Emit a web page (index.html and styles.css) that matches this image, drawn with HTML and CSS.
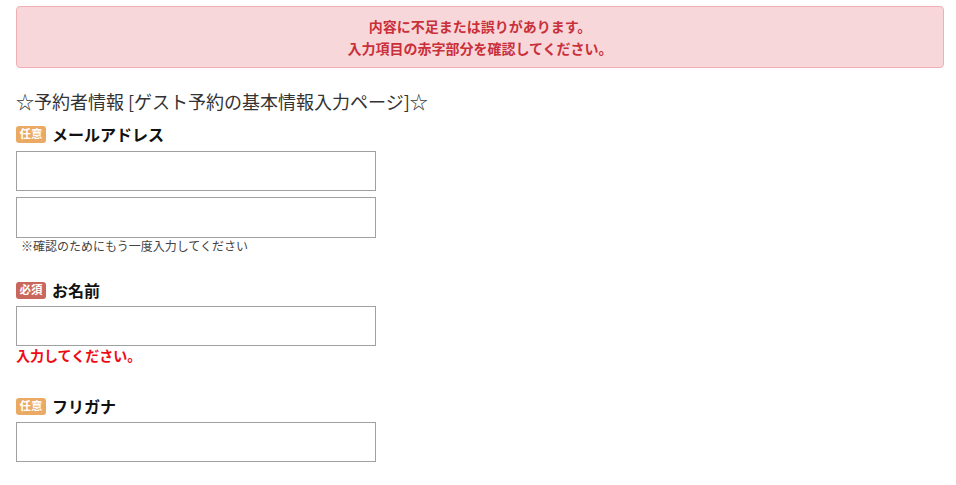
FILE: index.html
```html
<!DOCTYPE html>
<html lang="ja">
<head>
<meta charset="utf-8">
<title>予約者情報</title>
<link rel="stylesheet" href="styles.css">
</head>
<body>
<div class="page">
  <div class="alert">
    <p>内容に不足または誤りがあります。</p>
    <p>入力項目の赤字部分を確認してください。</p>
  </div>

  <h2 class="title">☆予約者情報 [ゲスト予約の基本情報入力ページ]☆</h2>

  <div class="field">
    <div class="label-row"><span class="badge badge-optional">任意</span><span class="label">メールアドレス</span></div>
    <input class="text-input" type="text">
    <input class="text-input text-input-confirm" type="text">
    <p class="note">※確認のためにもう一度入力してください</p>
  </div>

  <div class="field field-error">
    <div class="label-row"><span class="badge badge-required">必須</span><span class="label">お名前</span></div>
    <input class="text-input" type="text">
    <p class="error">入力してください。</p>
  </div>

  <div class="field">
    <div class="label-row"><span class="badge badge-optional">任意</span><span class="label">フリガナ</span></div>
    <input class="text-input" type="text">
  </div>
</div>
</body>
</html>
```

FILE: styles.css
```css
html, body {
  margin: 0;
  padding: 0;
  background: #ffffff;
}

body {
  font-family: "Noto Sans CJK JP", "Noto Sans", sans-serif;
  color: #333333;
}

.page {
  padding: 6px 12px 0 16px;
}

.alert {
  background: #f8d7da;
  border: 1px solid #f1aeb5;
  border-radius: 4px;
  padding: 8px 0;
  text-align: center;
  color: #c9303a;
  font-size: 14px;
  font-weight: 700;
  line-height: 22px;
}

.alert p {
  margin: 0;
}

.title {
  margin: 20px 0 8px;
  font-size: 18px;
  font-weight: 400;
  line-height: 27px;
  color: #333333;
}

.field {
  display: flex;
  flex-direction: column;
  align-items: flex-start;
  margin-bottom: 25px;
}

.field-error {
  margin-bottom: 31px;
}

.label-row {
  display: flex;
  align-items: center;
  height: 22px;
  gap: 6px;
  margin-bottom: 6px;
}

.field + .field .label-row {
  margin-bottom: 5px;
}

.badge {
  display: inline-flex;
  align-items: center;
  justify-content: center;
  width: 30px;
  height: 17px;
  border-radius: 3px;
  color: #ffffff;
  font-size: 11.5px;
  font-weight: 700;
  line-height: 1;
}

.badge-optional {
  background: #eaaa63;
}

.badge-required {
  background: #c9675c;
}

.label {
  font-size: 16px;
  font-weight: 700;
  color: #111111;
}

.text-input {
  box-sizing: border-box;
  width: 360px;
  height: 40px;
  margin: 0;
  border: 1px solid #a0a0a0;
  border-radius: 0;
  background: #ffffff;
  padding: 0 8px;
  font-size: 14px;
  font-family: inherit;
}

.text-input-confirm {
  margin-top: 6px;
  height: 41px;
}

.note {
  margin: 0;
  padding-left: 5px;
  font-size: 12px;
  line-height: 16px;
  color: #444444;
}

.error {
  margin: 0;
  font-size: 14px;
  font-weight: 700;
  line-height: 18px;
  color: #f00a14;
}
```
